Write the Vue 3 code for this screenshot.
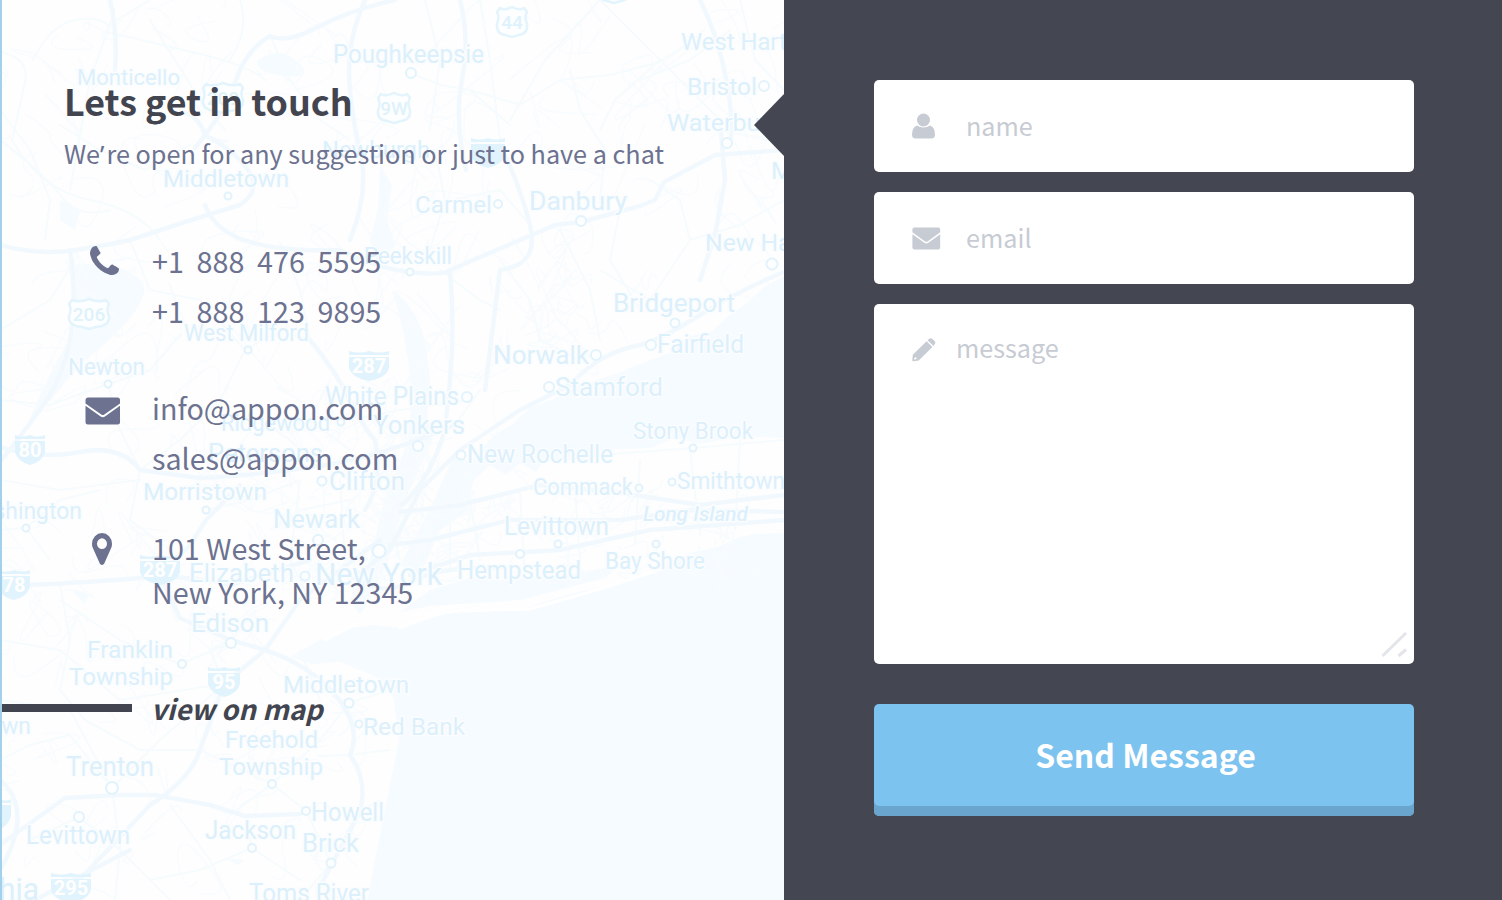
<script setup>
import { ref } from 'vue'

const name = ref('')
const email = ref('')
const message = ref('')

// Towns: label, left edge, baseline, width, font size
const towns = [
  ['Monticello', 77, 85, 103, 22],
  ['Poughkeepsie', 333, 63, 151, 25],
  ['West Hartford', 681, 50, 149, 23],
  ['Bristol', 687, 95, 70, 24],
  ['Waterbury', 667, 131, 114, 24],
  ['Newburgh', 322, 158, 108, 24],
  ['Middletown', 163, 187, 126, 24],
  ['Carmel', 415, 213, 77, 24],
  ['Danbury', 529, 210, 98, 26],
  ['Meriden', 771, 179, 90, 24],
  ['New Haven', 705, 251, 125, 24],
  ['Peekskill', 364, 264, 88, 23],
  ['Bridgeport', 613, 312, 122, 26],
  ['West Milford', 184, 341, 125, 23],
  ['Fairfield', 657, 353, 87, 25],
  ['Norwalk', 493, 364, 96, 26],
  ['Newton', 68, 375, 77, 23],
  ['Stamford', 555, 396, 108, 26],
  ['White Plains', 325, 405, 134, 25],
  ['Ridgewood', 221, 431, 109, 23],
  ['Yonkers', 373, 434, 92, 26],
  ['Stony Brook', 633, 439, 120, 23],
  ['Petersons', 208, 462, 115, 25],
  ['New Rochelle', 467, 463, 146, 25],
  ['Clifton', 329, 490, 76, 25],
  ['Smithtown', 677, 489, 108, 23],
  ['Commack', 533, 495, 100, 23],
  ['Morristown', 143, 500, 124, 24],
  ['Washington', -39, 519, 121, 23],
  ['Newark', 273, 528, 87, 26],
  ['Levittown', 504, 535, 105, 25],
  ['Bay Shore', 605, 569, 100, 24],
  ['Elizabeth', 189, 582, 105, 26],
  ['Hempstead', 457, 579, 124, 25],
  ['New York', 315, 585, 127, 31],
  ['Edison', 191, 632, 78, 26],
  ['Franklin', 87, 658, 86, 24],
  ['Township', 69, 685, 104, 24],
  ['Middletown', 283, 693, 126, 24],
  ['Allentown', -70, 734, 101, 23],
  ['Red Bank', 363, 735, 102, 24],
  ['Freehold', 225, 748, 93, 24],
  ['Township', 219, 775, 104, 24],
  ['Trenton', 66, 776, 88, 27],
  ['Howell', 311, 821, 73, 25],
  ['Jackson', 205, 839, 91, 25],
  ['Levittown', 26, 844, 104, 25],
  ['Brick', 302, 852, 57, 26],
  ['Philadelphia', -124, 900, 163, 31],
  ['Toms River', 249, 902, 120, 25],
]

// Town markers: centre x, centre y, radius
const dots = [
  [411, 73, 5], [764, 86, 5], [727, 143, 5], [498, 204, 4], [581, 221, 5],
  [228, 196, 3.5], [772, 264, 5.5], [410, 272, 3.5], [675, 323, 4.5], [651, 345, 5],
  [596, 355, 5], [549, 387, 5], [248, 350, 3.5], [108, 384, 3.5], [467, 397, 5],
  [418, 446, 5], [341, 422, 3.5], [461, 455, 4.5], [322, 481, 4.5], [693, 448, 3.5],
  [639, 488, 3.5], [672, 482, 3.5], [206, 510, 3.5], [26, 528, 3.5], [318, 540, 5],
  [379, 551, 6.5], [558, 544, 3.5], [520, 554, 4], [656, 544, 3.5], [305, 576, 4.5],
  [231, 643, 5], [182, 664, 4], [349, 703, 4.5], [359, 724, 3.5], [272, 784, 4],
  [112, 788, 6], [79, 817, 5], [306, 811, 4], [252, 848, 4], [331, 863, 4.5],
]

const interstates = [
  ['287', 369, 366, 40], ['80', 30, 450, 30], ['287', 160, 570, 40], ['78', 14, 585, 32],
  ['95', 224, 682, 32], ['295', 71, 888, 40], ['', 0, 814, 22], ['', 488, 153, 34],
]
const usRoutes = [
  ['44', 512, 22, 30], ['9W', 394, 108, 32], ['206', 89, 314, 40], ['209', 223, 98, 40], ['7', 614, -12, 30],
]

const highways = [
  'M110 0Q118 34 115 70',
  'M0 245Q40 256 76 250T130 240L185 222 240 205Q262 190 248 170T205 135Q200 118 184 112',
  'M205 205Q215 232 250 242T340 250Q375 268 410 272T450 270L520 240 555 225 581 222 640 206 655 200 664 182 715 155 784 150',
  'M395 0Q350 10 318 27T270 36Q246 50 236 80T195 148',
  'M365 0Q345 45 350 90T360 150Q370 190 350 240',
  'M460 0Q470 40 462 80T466 170',
  'M500 145Q520 185 530 225T500 270Q494 320 485 390',
  'M784 272Q740 290 700 315T640 345Q600 352 570 385L520 410 460 450 420 490 390 550 350 580',
  'M720 120L725 180 715 235 700 280',
  'M700 0Q720 40 728 90T727 143',
  'M450 270Q455 330 450 380T445 430Q430 480 402 505',
  'M0 447Q40 460 80 452T140 470L200 478Q260 475 320 466T455 425',
  'M310 340Q335 370 350 400T375 440Q384 480 365 510',
  'M30 585Q95 582 140 578T230 585L310 560',
  'M240 485L206 520 190 545 160 575 180 618 231 640 265 650',
  'M380 540L340 570 300 600 265 650 224 684 200 750Q190 780 150 805L70 890',
  'M265 650Q310 665 336 696T350 755Q368 780 360 812L318 890',
  'M0 845L65 798 120 795 155 795 210 805 245 816 300 814',
  'M400 512L460 505 540 485 620 493 700 505 784 495',
  'M390 545L430 540 510 520 620 520 690 510 784 512',
  'M410 575L470 555 560 550 650 530 784 520',
  'M350 575Q380 598 410 582T500 568',
  'M70 250Q85 350 40 410T0 460',
  'M0 780Q35 810 0 870M35 900L130 850',
]
const roads = [
  'M33 60Q50 25 75 20T108 26Q125 15 150 0M108 32Q150 42 200 54T265 80',
  'M0 52Q30 58 25 82T12 140Q40 190 90 200T160 240M115 10L90 80 70 190M150 20L200 100 225 130',
  'M240 0Q250 30 230 60M270 36L290 80 320 120 350 140M410 73L440 85 470 90 510 125',
  'M510 120L545 60 600 0M570 70L580 110 605 150 600 200M660 60L615 100 600 130M640 80L690 60 730 30',
  'M470 90L520 105 560 80 610 75 660 62 700 35M600 0L640 40 680 80 720 120',
  'M0 140Q40 170 60 195T110 210M0 110L30 150 50 200 45 240M190 145L145 170 100 150 60 125',
  'M500 260L530 300 540 340 580 360M560 230L590 290 600 340M600 270L650 300 690 240 680 200 650 180',
  'M440 270L480 300 500 310M620 210L610 260 640 310M784 200L740 225 690 240M740 0L755 60 784 90',
  'M0 330L50 300 75 260M130 240L150 290 200 300 245 350M245 350L280 330 310 340M245 350L220 400 180 440 140 470',
  'M108 384L150 370 180 335M0 400L50 405 108 384M108 384L120 430 140 470M280 242L300 290 310 340',
  'M206 510L250 500 300 480M140 470L130 520 170 550M26 528L60 500 100 490M0 530L26 528 50 560M0 480L60 490 140 480',
  'M60 585L70 640 60 690 85 720M231 643L180 664 120 640 60 600M0 640L60 650 120 700 224 684',
  'M85 720L140 750 200 750M0 700L70 710 112 788M0 760L30 745 70 735 112 788M112 788L160 740 224 684',
  'M224 684L210 650 231 640M200 750L272 784 306 811M349 703L320 740 272 784 230 815M306 811L331 863 300 900',
  'M112 788L120 850 115 900M79 817L30 840M79 817L120 850 170 900M170 805L210 860 230 900M245 816L252 848 300 880',
  'M349 703L390 690M350 755L390 750M318 756L350 755M360 812L380 800M300 650L320 700M150 880L200 870 252 848',
  'M470 500L480 560M520 490L525 580M575 490L580 560M640 460L635 545M690 450L700 535M740 440L735 530',
  'M540 460L600 455 693 448 784 440M420 490L450 520 450 570M385 500L400 560M340 480L345 560M300 480L290 560 310 600',
  'M350 420L400 410 470 400M330 380L310 420 350 450M260 420L290 440 320 470M480 390L455 425M270 530L300 510 350 500',
  'M430 250L445 200 435 150M430 130L440 60 425 0M480 0L490 60 500 140M530 225L500 190 450 200',
]

// Minor streets, laid out from a fixed seed so that the map never changes
let seed = 17
const rnd = () => ((seed = (seed * 16807) % 2147483647) / 2147483647)
const streets = []
const scatter = (count, x, y, w, h, len) => {
  for (let i = 0; i < count; i++) {
    const a = x + rnd() * w
    const b = y + rnd() * h
    const step = () => ((rnd() - 0.5) * len).toFixed(1)
    streets.push(`M${a.toFixed(1)} ${b.toFixed(1)}q${step()} ${step()} ${step()} ${step()}t${step()} ${step()}`)
  }
}
scatter(120, 0, 0, 780, 270, 70)
scatter(65, 0, 270, 490, 230, 65)
scatter(110, 230, 420, 200, 180, 38)
scatter(60, 430, 490, 340, 80, 38)
scatter(75, 0, 500, 290, 390, 60)
scatter(20, 270, 670, 90, 220, 45)
scatter(25, 490, 270, 160, 75, 45)
</script>

<template>
  <main class="contact">
    <section class="info">
      <svg class="map" viewBox="0 0 784 900" width="784" height="900" aria-hidden="true">
        <g class="water">
          <path d="M784 276L764 287 748 302 731 314 712 331 690 336 672 352 640 364 616 374 580 385 552 400 530 407 513 424 494 435 470 462 455 482 470 484 490 465 506 475 520 463 536 472 545 458 590 462 600 450 650 448 675 438 700 444 740 436 784 438Z" />
          <path d="M784 533L757 534 740 537 718 547 690 553 655 570 610 585 570 594 520 610 450 612 412 625 402 628 375 625 350 628 320 640 290 657 312 664 340 662 365 672 382 680 394 700 399 740 391 780 384 815 375 860 368 900 784 900Z" />
        </g>
        <g class="inlet">
          <path d="M392 290Q415 305 425 340L430 380Q424 410 432 440L405 500 388 560 372 595 360 615 350 600 370 560 382 510 408 440Q418 370 392 290Z" />
          <path d="M380 165L392 185 387 220 395 245 377 265 370 240 378 210Z" />
          <path d="M456 450L475 470 468 510 440 530 420 575 400 565 430 510Z" />
          <path d="M430 590L470 578 500 580 560 576 620 565 605 578 520 600 430 606 400 612Z" />
          <path d="M258 60Q280 45 298 62T285 76 258 60ZM60 200L80 210 75 230 60 220ZM205 137L230 140 220 147ZM72 590L90 594 84 604Z" />
          <path d="M75 265Q120 260 140 280T80 365L25 430Q50 370 75 330ZM225 858L244 860 238 865Z" />
        </g>
        <g class="streets"><path v-for="d in streets" :key="d" :d="d" /></g>
        <g class="roads"><path v-for="d in roads" :key="d" :d="d" /></g>
        <g class="highways"><path v-for="d in highways" :key="d" :d="d" /></g>
        <path class="beach" d="M400 628Q430 612 460 611T530 609L600 589 665 568M412 616L460 605M325 640L360 622" />
        <g class="dots"><circle v-for="(d, i) in dots" :key="i" :cx="d[0]" :cy="d[1]" :r="d[2]" /></g>
        <g v-for="(s, i) in interstates" :key="'i' + i" :transform="`translate(${s[1]} ${s[2]})`">
          <path class="shield" :d="`M${-s[3] / 2} -9V2Q${-s[3] / 2 + 3} 12 0 15Q${s[3] / 2 - 3} 12 ${s[3] / 2} 2V-9ZM${-s[3] / 2} -15Q${-s[3] / 4} -12 0 -15Q${s[3] / 4} -12 ${s[3] / 2} -15V-11H${-s[3] / 2}Z`" />
          <text class="shield-no" text-anchor="middle" y="7">{{ s[0] }}</text>
        </g>
        <g v-for="(s, i) in usRoutes" :key="'u' + i" :transform="`translate(${s[1]} ${s[2]})`">
          <path class="route" :d="`M${-s[3] / 2 + 3} -14Q${-s[3] / 4} -11 0 -15Q${s[3] / 4} -11 ${s[3] / 2 - 3} -14L${s[3] / 2} -10Q${s[3] / 2 - 3} -5 ${s[3] / 2} 2Q${s[3] / 2 + 1} 12 7 13L0 15 -7 13Q${-s[3] / 2 - 1} 12 ${-s[3] / 2} 2Q${-s[3] / 2 + 3} -5 ${-s[3] / 2} -10Z`" />
          <text class="route-no" text-anchor="middle" y="7">{{ s[0] }}</text>
        </g>
        <g class="towns">
          <text v-for="(t, i) in towns" :key="i" :x="t[1]" :y="t[2]" :textLength="t[3]" :font-size="t[4]" lengthAdjust="spacingAndGlyphs">{{ t[0] }}</text>
          <text class="region" x="643" y="521" textLength="105" font-size="21" lengthAdjust="spacingAndGlyphs">Long Island</text>
        </g>
      </svg>

      <div class="details">
        <h1>Lets get in touch</h1>
        <p class="lead">We<span class="apostrophe">’</span>re open for any suggestion or just to have a chat</p>

        <ul class="channels">
          <li class="phone">
            <svg class="icon" width="29" height="29" viewBox="192 128 1408 1408"><path d="M1600 1240q0 27-10 70.500t-21 68.500q-21 50-122 106-94 51-186 51-27 0-52.500-3.500t-57.500-12.500-47.500-14.500-55.500-20.500-49-18q-98-35-175-83-128-79-264.500-215.500t-215.500-264.500q-48-77-83-175-3-9-18-49t-20.500-55.500-14.500-47.500-12.500-57.500-3.500-52.500q0-92 51-186 56-101 106-122 25-11 68.500-21t70.500-10q14 0 21 3 18 6 53 76 11 19 30 54t35 63.500 31 53.500q3 4 17.500 25t21.500 35.500 7 28.500q0 20-28.500 50t-62 55-62 53-28.500 46q0 9 5 22.500t8.500 20.500 14 24 11.500 19q76 137 174 235t235 174q2 1 19 11.500t24 14 20.500 8.500 22.500 5q18 0 46-28.500t53-62 55-62 50-28.500q14 0 28.500 7t35.500 21.500 25 17.500q25 15 53.500 31t63.500 35 54 30q70 35 76 53 3 7 3 21z" /></svg>
            <div><span>+1 888 476 5595</span><span>+1 888 123 9895</span></div>
          </li>
          <li class="mail">
            <svg class="icon" width="36" height="28" viewBox="0 0 36 28"><path d="M2.800 0.500H32.500Q35 0.500 35 3V6.500L19.300 17.600Q17.800 18.600 16.300 17.600L0.500 6.500V3Q0.500 0.500 2.800 0.500ZM0.500 8.700L15.300 19.300Q17.800 21 20.300 19.300L35 8.700V25Q35 27.500 32.500 27.500H3Q0.500 27.500 0.500 25Z" /></svg>
            <div><span>info@appon.com</span><span>sales@appon.com</span></div>
          </li>
          <li class="address">
            <svg class="icon" width="20" height="32" viewBox="384 128 1024 1536" preserveAspectRatio="none"><path d="M1152 640q0-106-75-181t-181-75-181 75-75 181 75 181 181 75 181-75 75-181zm256 0q0 109-33 179l-364 774q-16 33-47.500 52t-67.500 19-67.500-19-46.500-52l-365-774q-33-70-33-179 0-212 150-362t362-150 362 150 150 362z" /></svg>
            <div><span>101 West Street,</span><span>New York, NY 12345</span></div>
          </li>
        </ul>

        <a class="view-map">view on map</a>
      </div>
    </section>

    <form class="form" @submit.prevent>
      <label class="field">
        <svg width="23" height="26" viewBox="0 0 23 26"><circle cx="11.500" cy="7" r="6.500" /><path d="M5 12.500Q8 14.600 11.500 14.600T18 12.500Q23 14.500 23 21.500Q23 25.500 19.500 25.500H3.500Q0 25.500 0 21.500Q0 14.500 5 12.500Z" /></svg>
        <input v-model="name" type="text" placeholder="name" />
      </label>
      <label class="field">
        <svg width="29" height="23" viewBox="0 0 36 28" preserveAspectRatio="none"><path d="M2.800 0.500H32.500Q35 0.500 35 3V6.500L19.300 17.600Q17.800 18.600 16.300 17.600L0.500 6.500V3Q0.500 0.500 2.800 0.500ZM0.500 8.700L15.300 19.300Q17.800 21 20.300 19.300L35 8.700V25Q35 27.500 32.500 27.500H3Q0.500 27.500 0.500 25Z" /></svg>
        <input v-model="email" type="text" placeholder="email" />
      </label>
      <label class="field area">
        <svg width="24" height="24" viewBox="0 0 24 24"><path fill-rule="evenodd" d="M0.800 16.800L14.600 3.200 20.400 9 6.700 22.400 1.600 23.200Q0.200 23.300 0.300 22ZM15.600 2.200L17.200 0.800Q18.900 -0.500 20.400 0.900L22.600 3.100Q24 4.800 22.700 6.300L21.400 8ZM2.200 20.300V21.500H3.500L4.800 20.300 3.500 19.100Z" /></svg>
        <textarea v-model="message" placeholder="message"></textarea>
        <svg class="grip" width="30" height="30" viewBox="0 0 30 30"><path d="M3.500 26L27 3M19.500 26L27 19.500" /></svg>
      </label>
      <button type="submit">Send Message</button>
    </form>
  </main>
</template>

<style>
body {
  margin: 0;
  overflow: hidden;
}
</style>

<style scoped>
.contact {
  display: flex;
  box-sizing: border-box;
  width: 1502px;
  height: 900px;
  overflow: hidden;
  background: #444752;
  color: #6c7290;
  font-family: "Noto Sans CJK SC", "Noto Sans", sans-serif;
}

.info {
  position: relative;
  box-sizing: border-box;
  flex: 0 0 784px;
  height: 900px;
  border-left: 2px solid #a3d0ea;
  background: #fefefe;
}
.map {
  position: absolute;
  left: -2px;
  top: 0;
  clip-path: inset(0 0 0 2px);
  font-family: Roboto, sans-serif;
}
.water { fill: #f6fbff; }
.inlet { fill: #f5fbff; }
.streets, .roads, .highways, .beach {
  fill: none;
  stroke-linejoin: round;
  stroke-linecap: round;
}
.streets { stroke: #f8fcfe; stroke-width: 1.5; }
.roads { stroke: #f6fbfe; stroke-width: 2; }
.highways { stroke: #f2f9fe; stroke-width: 4.5; }
.beach { stroke: #fff; stroke-width: 3; }
.dots { fill: #fdfeff; stroke: #e2f3fc; stroke-width: 2; }
.shield { fill: #e1f3fd; }
.shield-no { fill: #fff; font-size: 20px; font-weight: 700; }
.route { fill: #fdfeff; stroke: #e3f4fd; stroke-width: 2.5; stroke-linejoin: round; }
.route-no { fill: #def2fc; font-size: 19px; font-weight: 500; }
.towns {
  fill: #dcf0fc;
  stroke: #fbfdff;
  stroke-width: 3px;
  stroke-linejoin: round;
  paint-order: stroke;
}
.region { font-style: italic; font-weight: 500; }

.details {
  position: relative;
  padding: 75px 0 0 62px;
}
h1 {
  margin: 0;
  color: #42454f;
  font-size: 35.800px;
  font-weight: 700;
  line-height: 50px;
  white-space: nowrap;
}
.lead {
  height: 38px;
  margin: 9px 0 0;
  font-size: 25.200px;
  line-height: 38px;
  white-space: nowrap;
}
.apostrophe {
  margin-right: 2px;
  font-family: "Noto Sans", sans-serif;
}
.channels {
  display: flex;
  flex-direction: column;
  margin: 64px 0 0;
  padding: 0;
  list-style: none;
}
.channels li {
  display: grid;
  grid-template-columns: 78px auto;
  column-gap: 10px;
}
.channels span {
  display: block;
  font-size: 28.700px;
  line-height: 50px;
  white-space: nowrap;
}
.icon {
  justify-self: center;
  fill: #6c7290;
}
.phone .icon { margin: 10px 0 0 3px; }
.phone span { word-spacing: 6.300px; }
.mail { margin-top: 47px; }
.mail .icon { margin: 14px 1px 0 0; }
.address { margin-top: 43px; }
.address .icon { margin: 7px 2px 0 0; }
.channels .address span { line-height: 44px; }

.view-map {
  display: flex;
  align-items: center;
  gap: 19px;
  margin: 71px 0 0 -62px;
  color: #42454f;
  font-size: 27.500px;
  font-style: italic;
  font-weight: 700;
  line-height: 46px;
  white-space: nowrap;
}
.view-map::before {
  content: "";
  width: 130px;
  height: 8px;
  background: #42454f;
}

.form {
  position: relative;
  display: flex;
  flex: 1;
  flex-direction: column;
  box-sizing: border-box;
  padding: 80px 88px 0 90px;
}
.form::before {
  content: "";
  position: absolute;
  top: 94px;
  left: -30px;
  border: solid transparent;
  border-width: 31px 30px 31px 0;
  border-right-color: #444752;
}
.field {
  position: relative;
  display: flex;
  align-items: center;
  box-sizing: border-box;
  height: 92px;
  margin-bottom: 20px;
  padding-left: 38px;
  border-radius: 5px;
  background: #fff;
}
.field > svg { flex: none; fill: #c7cbd3; }
.field input,
.field textarea {
  flex: 1;
  min-width: 0;
  box-sizing: border-box;
  padding: 0;
  border: 0;
  outline: 0;
  background: transparent;
  color: #6c7290;
  font: 25.200px/38px "Noto Sans CJK SC", "Noto Sans", sans-serif;
}
.field input { margin: 0 0 3px 31px; }
.field:nth-child(2) input { margin-left: 25px; }
.field ::placeholder { color: #c7cbd3; opacity: 1; }
.area {
  align-items: flex-start;
  height: 360px;
  margin-bottom: 40px;
  padding-top: 24px;
}
.area > svg { margin-top: 10px; }
.field textarea {
  height: 320px;
  margin-left: 20px;
  resize: none;
}
.area .grip {
  position: absolute;
  right: 5px;
  bottom: 4px;
  margin: 0;
  fill: none;
  stroke: #e2e5e9;
  stroke-width: 3;
}
button {
  height: 112px;
  padding: 0 0 12px 3px;
  border: 0;
  border-radius: 5px;
  background: #7cc3ef;
  box-shadow: inset 0 -10px #69a5cd;
  color: #fff;
  font: 700 32px/50px "Noto Sans CJK SC", "Noto Sans", sans-serif;
}
</style>
